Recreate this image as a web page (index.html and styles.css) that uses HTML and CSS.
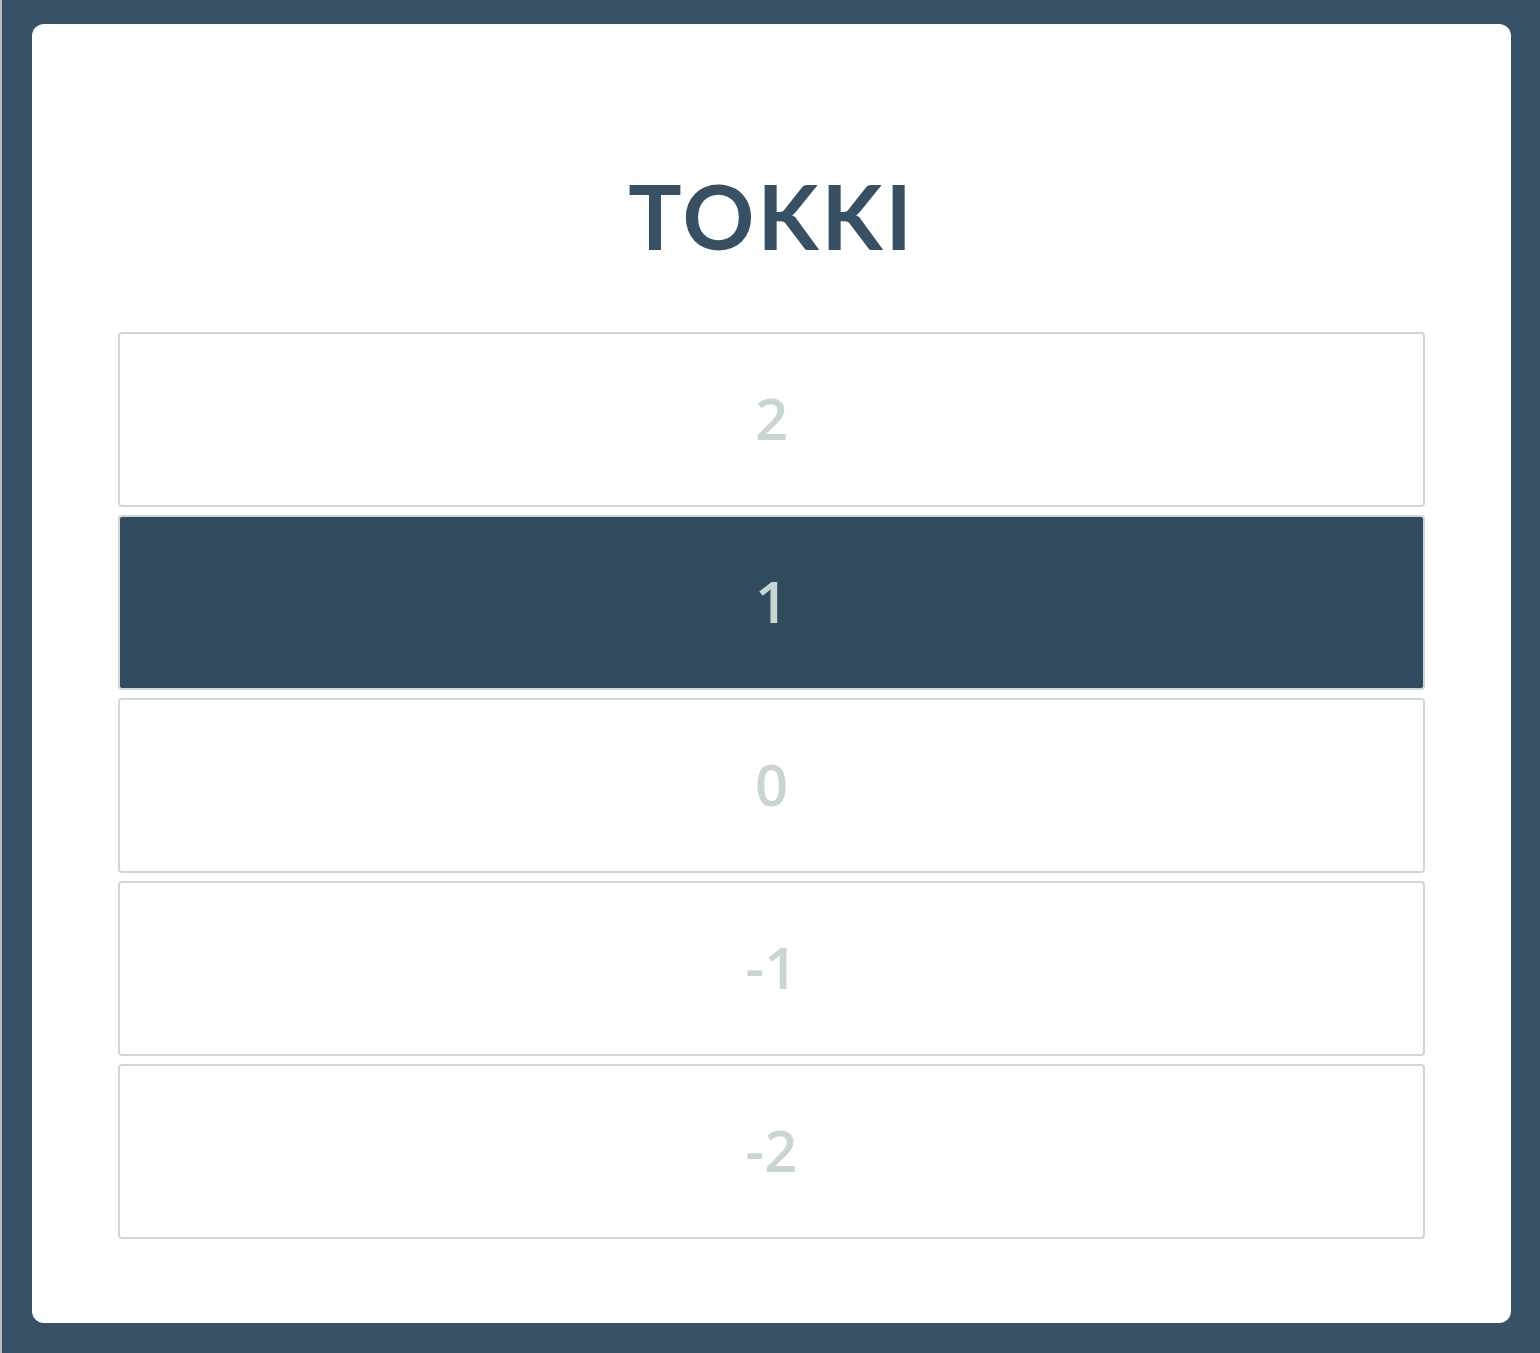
FILE: index.html
```html
<!DOCTYPE html>
<html>
<head>
<meta charset="utf-8">
<link rel="stylesheet" href="styles.css">
</head>
<body>
<div class="page">
  <div class="card">
    <h1 class="title">TOKKI</h1>
    <div class="options">
      <div class="option">2</div>
      <div class="option selected">1</div>
      <div class="option">0</div>
      <div class="option">-1</div>
      <div class="option">-2</div>
    </div>
  </div>
</div>
</body>
</html>
```
FILE: styles.css
```css
html, body {
  margin: 0;
  padding: 0;
  background: #375266;
}
.page {
  width: 1540px;
  height: 1353px;
  box-sizing: border-box;
  border-left: 2px solid #b9bdc0;
  padding: 24px 29px 30px 30px;
}
.card {
  background: #ffffff;
  border-radius: 12px;
  height: 1299px;
  box-sizing: border-box;
  padding: 0 86px;
  display: flex;
  flex-direction: column;
}
.title {
  margin: 0;
  height: 308px;
  display: flex;
  align-items: center;
  justify-content: center;
  padding-top: 74px;
  box-sizing: border-box;
  font-family: "Lato", "Noto Sans", sans-serif;
  font-weight: 700;
  font-size: 89px;
  letter-spacing: 3px;
  color: #375064;
}
.options {
  display: flex;
  flex-direction: column;
  gap: 8px;
}
.option {
  height: 175px;
  box-sizing: border-box;
  border: 2px solid #cdd8d4;
  border-radius: 4px;
  padding-bottom: 5px;
  display: flex;
  align-items: center;
  justify-content: center;
  font-family: "Open Sans", "Noto Sans", sans-serif;
  font-weight: 600;
  font-size: 58px;
  color: #c8d6d0;
}
.option.selected {
  background: #304b5e;
  color: #c8d6d0;
}
```
